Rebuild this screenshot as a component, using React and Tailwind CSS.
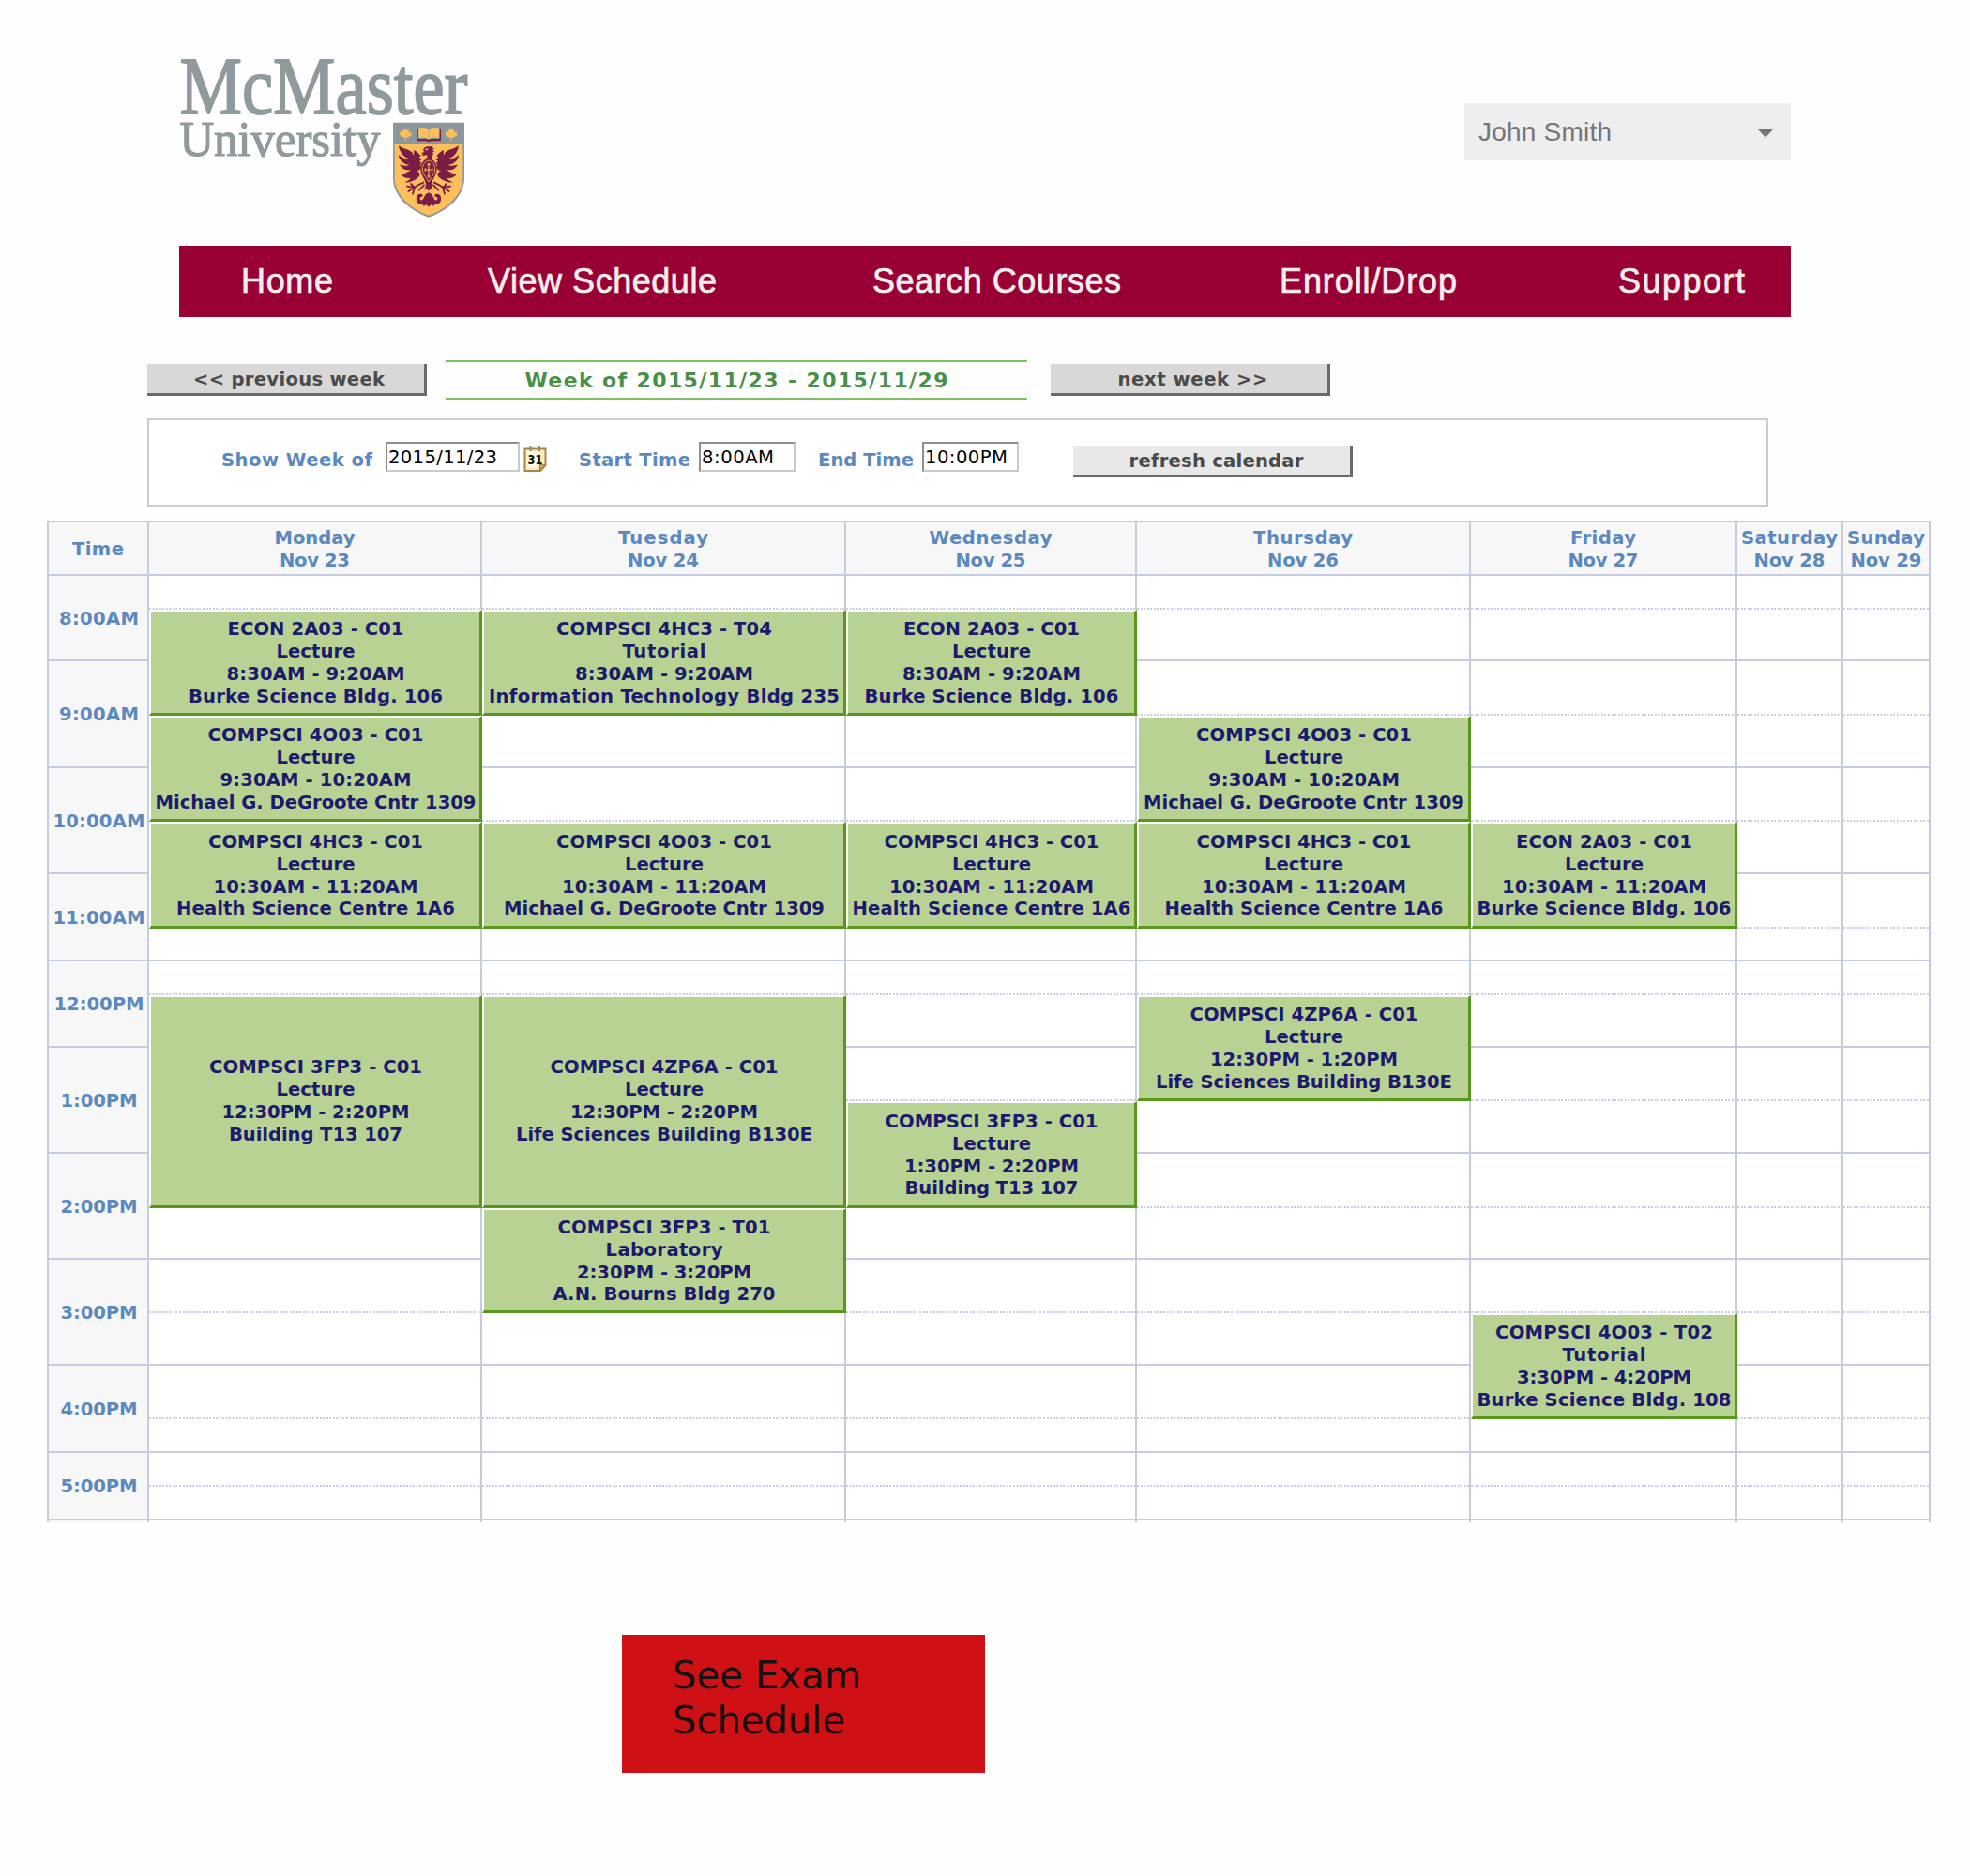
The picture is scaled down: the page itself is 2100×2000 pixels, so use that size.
import React, { useLayoutEffect, useRef } from "react";

// A line of text whose tracking is adjusted so that it spans `w` pixels.
function Fit({ w, children, className = "" }) {
  const ref = useRef(null);
  useLayoutEffect(() => {
    const el = ref.current;
    el.style.letterSpacing = "0px";
    const n = el.textContent.length;
    const gap = (w - el.getBoundingClientRect().width) / (n - 1);
    el.style.letterSpacing = gap + "px";
    el.style.marginRight = -gap + "px";
  }, [w, children]);
  return (
    <span ref={ref} className={"inline-block whitespace-nowrap " + className}>
      {children}
    </span>
  );
}

const NAV = [
  ["Home", "ml-[66px]", 98],
  ["View Schedule", "ml-[165px]", 244],
  ["Search Courses", "ml-[166px]", 265],
  ["Enroll/Drop", "ml-[169px]", 189],
  ["Support", "ml-[172px]", 135],
];

const DAYS = [
  ["Monday", 86, "Nov 23", 75],
  ["Tuesday", 96, "Nov 24", 76],
  ["Wednesday", 131, "Nov 25", 75],
  ["Thursday", 106, "Nov 26", 76],
  ["Friday", 70, "Nov 27", 75],
  ["Saturday", 103, "Nov 28", 76],
  ["Sunday", 83, "Nov 29", 76],
];

const HOURS = [
  ["8:00AM", 85],
  ["9:00AM", 85],
  ["10:00AM", 98],
  ["11:00AM", 98],
  ["12:00PM", 96],
  ["1:00PM", 82],
  ["2:00PM", 82],
  ["3:00PM", 82],
  ["4:00PM", 82],
  ["5:00PM", 82],
];

// day: 0 = Monday, slot: half hours after 8:00AM
const EVENTS = [
  { day: 0, slot: 1, span: 2, lines: [["ECON 2A03 - C01", 188], ["Lecture", 84], ["8:30AM - 9:20AM", 190], ["Burke Science Bldg. 106", 271]] },
  { day: 0, slot: 3, span: 2, lines: [["COMPSCI 4O03 - C01", 230], ["Lecture", 84], ["9:30AM - 10:20AM", 204], ["Michael G. DeGroote Cntr 1309", 342]] },
  { day: 0, slot: 5, span: 2, lines: [["COMPSCI 4HC3 - C01", 229], ["Lecture", 84], ["10:30AM - 11:20AM", 218], ["Health Science Centre 1A6", 297]] },
  { day: 0, slot: 9, span: 4, lines: [["COMPSCI 3FP3 - C01", 227], ["Lecture", 84], ["12:30PM - 2:20PM", 200], ["Building T13 107", 185]] },
  { day: 1, slot: 1, span: 2, lines: [["COMPSCI 4HC3 - T04", 230], ["Tutorial", 89], ["8:30AM - 9:20AM", 190], ["Information Technology Bldg 235", 374]] },
  { day: 1, slot: 5, span: 2, lines: [["COMPSCI 4O03 - C01", 230], ["Lecture", 84], ["10:30AM - 11:20AM", 218], ["Michael G. DeGroote Cntr 1309", 342]] },
  { day: 1, slot: 9, span: 4, lines: [["COMPSCI 4ZP6A - C01", 243], ["Lecture", 84], ["12:30PM - 2:20PM", 200], ["Life Sciences Building B130E", 316]] },
  { day: 1, slot: 13, span: 2, lines: [["COMPSCI 3FP3 - T01", 227], ["Laboratory", 125], ["2:30PM - 3:20PM", 186], ["A.N. Bourns Bldg 270", 237]] },
  { day: 2, slot: 1, span: 2, lines: [["ECON 2A03 - C01", 188], ["Lecture", 84], ["8:30AM - 9:20AM", 190], ["Burke Science Bldg. 106", 271]] },
  { day: 2, slot: 5, span: 2, lines: [["COMPSCI 4HC3 - C01", 229], ["Lecture", 84], ["10:30AM - 11:20AM", 218], ["Health Science Centre 1A6", 297]] },
  { day: 2, slot: 11, span: 2, lines: [["COMPSCI 3FP3 - C01", 227], ["Lecture", 84], ["1:30PM - 2:20PM", 186], ["Building T13 107", 185]] },
  { day: 3, slot: 3, span: 2, lines: [["COMPSCI 4O03 - C01", 230], ["Lecture", 84], ["9:30AM - 10:20AM", 204], ["Michael G. DeGroote Cntr 1309", 342]] },
  { day: 3, slot: 5, span: 2, lines: [["COMPSCI 4HC3 - C01", 229], ["Lecture", 84], ["10:30AM - 11:20AM", 218], ["Health Science Centre 1A6", 297]] },
  { day: 3, slot: 9, span: 2, lines: [["COMPSCI 4ZP6A - C01", 243], ["Lecture", 84], ["12:30PM - 1:20PM", 200], ["Life Sciences Building B130E", 316]] },
  { day: 4, slot: 5, span: 2, lines: [["ECON 2A03 - C01", 188], ["Lecture", 84], ["10:30AM - 11:20AM", 218], ["Burke Science Bldg. 106", 271]] },
  { day: 4, slot: 15, span: 2, lines: [["COMPSCI 4O03 - T02", 232], ["Tutorial", 89], ["3:30PM - 4:20PM", 186], ["Burke Science Bldg. 108", 271]] },
];

const taken = new Set();
EVENTS.forEach((e) => {
  for (let i = 0; i < e.span; i++) taken.add(e.day + ":" + (e.slot + i));
});

function EagleHalf() {
  return (
    <g>
      <path d="M33 88 C45 98 62 99 75 108 C81 117 86 132 89 150 L87 178 C76 181 62 182 52 175 C62 173 68 169 71 165 C57 169 42 162 36 148 C49 154 61 153 67 149 C51 149 36 138 32 118 C44 128 58 131 66 130 C48 124 35 108 33 88 Z" />
      <path d="M39 177 C54 184 72 180 89 168 C101 172 104 182 97 188 C86 198 66 208 52 205 C62 201 68 196 72 191 C58 194 45 189 39 177 Z" />
      <path d="M81 102 C92 106 98 113 104 122 L98 124 L106 134 L100 136 L106 146 L101 149 L105 158 C101 166 92 170 86 168 C92 152 78 142 85 133 C78 126 83 114 81 102 Z" />
      <path d="M112 206 C102 211 92 213 84 222 M84 222 L60 218 M84 222 L64 234 M84 222 L78 242 M84 222 L72 210 M114 214 L98 230" fill="none" stroke="#7a1c45" strokeWidth="5.5" strokeLinecap="round" />
      <path d="M91 266 C86 250 94 240 107 243 C112 246 111 251 105 252 C99 254 100 262 106 262 C112 262 114 250 120 243 L129 238 V284 L122 277 L113 281 L108 275 L98 276 Z" />
    </g>
  );
}

function Logo() {
  return (
    <svg width="312" height="180" viewBox="188 58 312 180" className="block overflow-visible">
      <g fill="#8f9a9f" stroke="#8f9a9f" strokeLinejoin="round" fontFamily="'Liberation Serif', serif">
        <text x="191.5" y="120.5" fontSize="86" strokeWidth="1.8" textLength="307" lengthAdjust="spacingAndGlyphs">McMaster</text>
        <text x="191.5" y="165.5" fontSize="53" strokeWidth="1.2" textLength="214" lengthAdjust="spacingAndGlyphs">University</text>
      </g>
      <g transform="translate(414 126) scale(0.33333)">
        <path d="M15 14 H243 V192 C243 240 205 290 129 317 C53 290 15 240 15 192 Z" fill="#8b979d" />
        <path d="M20 82 H238 V191 C238 236 200 285 129 311 C58 285 20 236 20 191 Z" fill="#fcbf5c" />
        <path id="leaf" d="M55 30 L60 39 L65 36 L64 46 L74 43 L72 50 L76 52 L65 61 L56 62 L56 73 H53 L53 62 L45 61 L35 52 L38 50 L36 43 L46 46 L45 36 L50 39 Z" fill="#fcbf5c" />
        <use href="#leaf" x="146" />
        <path d="M90 36 H95 V66 H122 L129 70 L136 66 H163 V36 H168 V73 H137 L129 76 L121 73 H90 Z" fill="#7a1c45" />
        <path d="M97 32 C108 29 120 30 128 35 V66 C120 61 108 60 97 63 Z M130 35 C138 30 152 29 163 32 V63 C152 60 138 61 130 66 Z" fill="#fcbf5c" />
        <g fill="#7a1c45">
          <EagleHalf />
          <g transform="translate(258 0) scale(-1 1)">
            <EagleHalf />
          </g>
          <path d="M103 112 L115 108 L111 103 C112 95 120 90 130 91 L144 89 L139 94 L147 97 L141 101 L147 107 L141 110 L145 117 L139 118 L140 130 L118 130 C124 127 126 123 124 118 L112 120 L105 118 L113 114 Z" />
          <path d="M117 99 L127 97 L127 101 L119 103 Z" fill="#fcbf5c" />
          <path d="M129 127 C145 131 156 146 155 164 C154 184 140 194 138 212 L142 230 L134 226 L129 234 L124 226 L116 230 L120 212 C118 194 104 184 103 164 C102 146 113 131 129 127 Z" />
          <path d="M129 135 C143 140 149 150 149 163 C149 178 138 188 129 204 C120 188 109 178 109 163 C109 150 115 140 129 135 Z" fill="none" stroke="#fcbf5c" strokeWidth="2.6" />
          <path d="M129 143 V192 M115 165 H143 M124 148 H134 M118 160 V170 M140 160 V170 M124 186 H134" stroke="#fcbf5c" strokeWidth="3.4" fill="none" />
        </g>
      </g>
    </svg>
  );
}

function CalendarIcon() {
  return (
    <svg width="26" height="30" viewBox="0 0 26 30" className="block">
      <path d="M1.5 4.5 H23.5 V22 L18 28 H1.5 Z" fill="#fdeebb" stroke="#a8854c" strokeWidth="2" />
      <rect x="4" y="7" width="12" height="17" fill="#fffbe8" />
      <path d="M23.5 21.5 H17.5 V28 Z" fill="#c9a86b" stroke="#a8854c" strokeWidth="1.2" />
      <path d="M7.5 1 V7 M17 1 V7" stroke="#8c8a80" strokeWidth="2" />
      <text x="4.5" y="20.5" fontFamily="'DejaVu Sans', sans-serif" fontWeight="bold" fontSize="14" textLength="16" lengthAdjust="spacingAndGlyphs" fill="#111">31</text>
    </svg>
  );
}

function WeekButton({ children, w, className }) {
  return (
    <div className={"flex h-[34px] w-[298px] justify-center border-r-[3px] border-b-[3px] border-[#6a6a6a] pt-[5px] text-[19.6px] leading-6 font-bold text-[#4a4a4a] " + className}>
      <Fit w={w}>{children}</Fit>
    </div>
  );
}

function Field({ children, w, className }) {
  return (
    <div className={"h-8 border-2 border-t-[#8e8e8e] border-r-[#c9c9c9] border-b-[#c9c9c9] border-l-[#8e8e8e] bg-white pt-[3px] pl-px text-[19.6px] leading-6 text-black " + className}>
      <Fit w={w}>{children}</Fit>
    </div>
  );
}

function Timetable() {
  return (
    <div className="ml-[50px] grid w-[2008px] grid-cols-[107px_355px_388px_310px_356px_284px_113px_93px] grid-rows-[57px_36px_55px_58px_56px_57px_56px_58px_35px_36px_56px_57px_56px_58px_55px_57px_56px_57px_36px_36px_36px_2px] border-t-2 border-l-2 border-[#c5cce0] text-[19.6px] leading-[23.8px] font-bold text-[#5b89bf]">
      <div className="flex items-center justify-center border-r-2 border-b-2 border-[#c5cce0] bg-[#f7f7f7] pt-[3px]">
        <Fit w={55}>Time</Fit>
      </div>
      {DAYS.map(([day, dw, date, tw]) => (
        <div key={day} className="flex flex-col items-center justify-center border-r-2 border-b-2 border-[#c5cce0] bg-[#f7f7f7] pt-[3px]">
          <Fit w={dw}>{day}</Fit>
          <Fit w={tw}>{date}</Fit>
        </div>
      ))}
      {HOURS.map(([label, w], i) => (
        <div
          key={label}
          className="flex items-center justify-center border-r-2 border-b-2 border-[#c5cce0] bg-[#f7f7f7] pt-0.5 pl-0.5"
          style={{ gridColumn: 1, gridRow: `${i * 2 + 2} / span 2` }}
        >
          <Fit w={w}>{label}</Fit>
        </div>
      ))}
      {DAYS.map(([day], d) =>
        Array.from({ length: 20 }, (_, s) =>
          taken.has(d + ":" + s) ? null : (
            <div
              key={day + s}
              className={"flex flex-col justify-end border-r-2 border-[#c5cce0] bg-white " + (s % 2 ? "border-b-2" : "")}
              style={{ gridColumn: d + 2, gridRow: s + 2 }}
            >
              {s % 2 === 0 && (
                <div className="h-[2px] bg-[repeating-linear-gradient(90deg,#c8cfe2_0px,#c8cfe2_2px,#ffffff_2px,#ffffff_3.56px)]" />
              )}
            </div>
          )
        )
      )}
      {EVENTS.map((e) => (
        <div
          key={e.day + ":" + e.slot}
          className={
            "flex flex-col items-center justify-center border-t-2 border-r-[3px] border-b-[3px] border-l-2 border-t-white border-r-[#57981b] border-b-[#57981b] border-l-white bg-[#b8d293] pl-px text-[#1d1a6e] " +
            (e.span === 2 ? "pt-0.5" : "")
          }
          style={{ gridColumn: e.day + 2, gridRow: `${e.slot + 2} / span ${e.span}` }}
        >
          {e.lines.map(([t, w]) => (
            <Fit key={t} w={w}>{t}</Fit>
          ))}
        </div>
      ))}
      {Array.from({ length: 8 }, (_, i) => (
        <div key={i} className={"border-r-2 border-[#c5cce0] " + (i === 0 ? "bg-[#f7f7f7]" : "bg-white")} style={{ gridColumn: i + 1, gridRow: 22 }} />
      ))}
    </div>
  );
}

export default function App() {
  return (
    <div className="flex h-[2000px] w-[2100px] flex-col overflow-hidden bg-[#fefefe] font-['DejaVu_Sans',sans-serif]">
      <header className="flex h-[262px] items-start justify-between pr-[191px] pl-[188px]">
        <div className="pt-[58px]">
          <Logo />
        </div>
        <div className="mt-[110px] flex h-[61px] w-[348px] items-center justify-between bg-[#eeeeee] pr-[19px] pl-[15px] font-['Liberation_Sans',sans-serif] text-[28px] text-[#757575]">
          <Fit w={142}>John Smith</Fit>
          <svg width="16" height="9" viewBox="0 0 16 9" className="mt-1 block">
            <path d="M0 0 H16 L8 8.5 Z" fill="#757575" />
          </svg>
        </div>
      </header>

      <nav className="ml-[191px] flex h-[76px] w-[1718px] items-center bg-[#990033] font-['Liberation_Sans',sans-serif] text-[36px] text-[#f0eeee] [-webkit-text-stroke:0.7px_#f0eeee]">
        {NAV.map(([label, gap, w]) => (
          <a key={label} className={gap}>
            <Fit w={w}>{label}</Fit>
          </a>
        ))}
      </nav>

      <section className="flex h-[108px] items-start pt-[46px] pl-[157px]">
        <WeekButton w={204} className="mt-1 bg-[#d8d8d8] pl-[7px]">{"<< previous week"}</WeekButton>
        <div className="ml-5 flex h-[42px] w-[620px] items-center justify-center border-y-2 border-[#7cc062] text-[22px] font-bold text-[#4a8f48]">
          <Fit w={451}>Week of 2015/11/23 - 2015/11/29</Fit>
        </div>
        <WeekButton w={160} className="mt-1 ml-[25px] bg-[#d8d8d8] pl-[8px]">{"next week >>"}</WeekButton>
      </section>

      <section className="mb-[15px] ml-[157px] flex h-[94px] w-[1728px] items-start border-2 border-[#cccccc] bg-white pl-[77px] text-[19.6px] leading-6 font-bold text-[#5b89bf]">
        <div className="mt-[31px] w-[161px]"><Fit w={161}>Show Week of</Fit></div>
        <Field w={116} className="mt-[23px] ml-[14px] w-[143px] font-normal">2015/11/23</Field>
        <div className="mt-[26px] ml-1"><CalendarIcon /></div>
        <div className="mt-[31px] ml-[33px] w-[119px]"><Fit w={119}>Start Time</Fit></div>
        <Field w={77} className="mt-[23px] ml-[9px] w-[103px] font-normal">8:00AM</Field>
        <div className="mt-[31px] ml-[24px] w-[102px]"><Fit w={102}>End Time</Fit></div>
        <Field w={88} className="mt-[23px] ml-[9px] w-[103px] font-normal">10:00PM</Field>
        <WeekButton w={186} className="mt-[27px] ml-[58px] bg-[#e8e8e8] pl-[10px]">refresh calendar</WeekButton>
      </section>

      <Timetable />

      <button className="mt-[120px] ml-[663px] flex h-[147px] w-[387px] flex-col items-start bg-[#cf1014] pt-[19px] pl-[54px] text-left text-[40px] leading-[48px] text-[#151111]">
        <Fit w={201}>See Exam</Fit>
        <Fit w={184}>Schedule</Fit>
      </button>
    </div>
  );
}
